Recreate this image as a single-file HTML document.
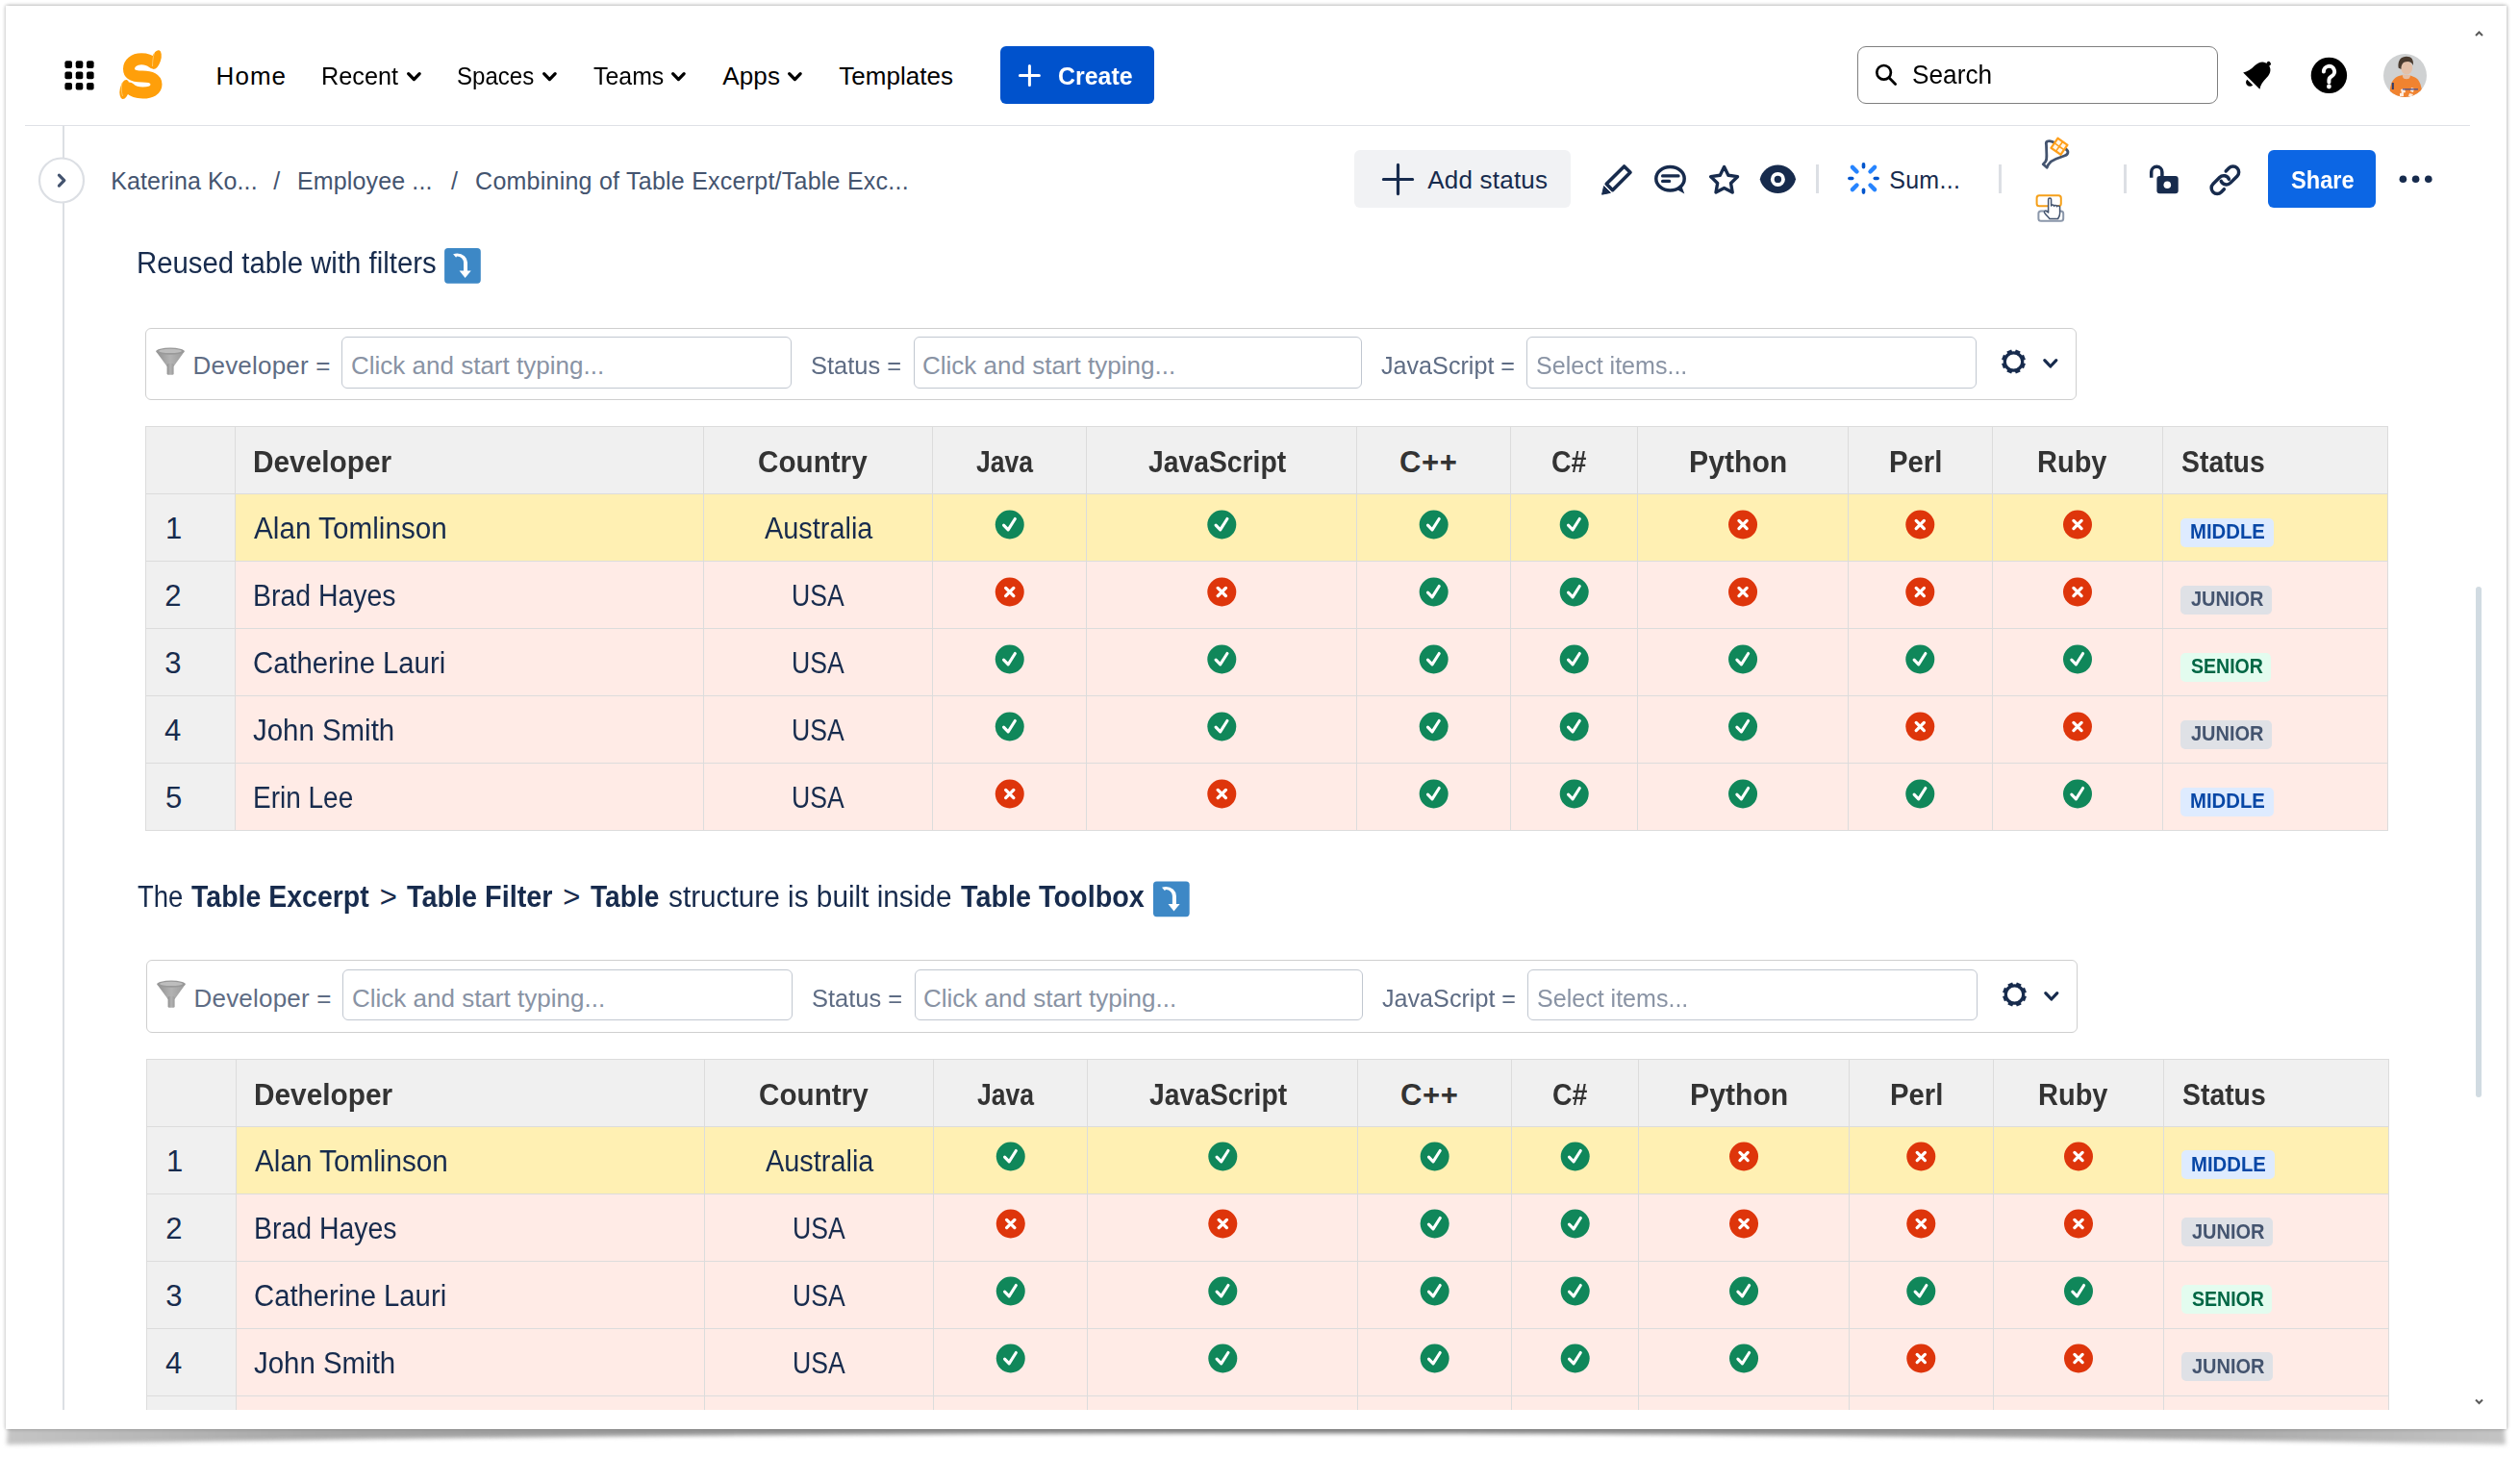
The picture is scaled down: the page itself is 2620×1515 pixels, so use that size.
<!DOCTYPE html>
<html><head><meta charset="utf-8"><title>Combining of Table Excerpt/Table Excerpt Include</title>
<style>
html,body{margin:0;padding:0;background:#fff;width:2620px;height:1515px;overflow:hidden;position:relative}
.t{position:absolute;white-space:nowrap;font-family:"Liberation Sans",sans-serif;line-height:1;transform-origin:0 0}
svg{overflow:visible}
</style></head><body>
<svg style="position:absolute;left:0;top:1470px" width="2620" height="45" viewBox="0 1470 2620 45">
<defs>
<linearGradient id="shg" x1="0" x2="1" y1="0" y2="0">
<stop offset="0" stop-color="#c4c4c4"/><stop offset="0.12" stop-color="#a8a8a8"/><stop offset="0.3" stop-color="#939393"/><stop offset="0.5" stop-color="#858585"/><stop offset="0.7" stop-color="#939393"/><stop offset="0.88" stop-color="#a8a8a8"/><stop offset="1" stop-color="#c4c4c4"/>
</linearGradient>
<filter id="shb" x="-5%" y="-100%" width="110%" height="300%"><feGaussianBlur stdDeviation="2"/></filter>
</defs>
<path d="M8,1484 L2604,1484 L2605,1502 Q1306,1479 7,1502 Z" fill="url(#shg)" filter="url(#shb)"/>
</svg>
<div style="position:absolute;left:6px;top:6px;width:2600px;height:1480px;background:#fff;box-shadow:-1.5px 0 3.5px rgba(0,0,0,0.17),1.5px 0 3.5px rgba(0,0,0,0.17),0 -1px 4px rgba(0,0,0,0.10)"></div>
<svg style="position:absolute;left:64px;top:60px;" width="38" height="38" viewBox="64 60 38 38"><rect x="67.40" y="63.30" width="7.6" height="7.6" rx="2" fill="#000"/><rect x="78.70" y="63.30" width="7.6" height="7.6" rx="2" fill="#000"/><rect x="90.00" y="63.30" width="7.6" height="7.6" rx="2" fill="#000"/><rect x="67.40" y="74.60" width="7.6" height="7.6" rx="2" fill="#000"/><rect x="78.70" y="74.60" width="7.6" height="7.6" rx="2" fill="#000"/><rect x="90.00" y="74.60" width="7.6" height="7.6" rx="2" fill="#000"/><rect x="67.40" y="85.90" width="7.6" height="7.6" rx="2" fill="#000"/><rect x="78.70" y="85.90" width="7.6" height="7.6" rx="2" fill="#000"/><rect x="90.00" y="85.90" width="7.6" height="7.6" rx="2" fill="#000"/></svg>
<svg style="position:absolute;left:118px;top:48px;" width="56" height="62" viewBox="118 48 56 62"><g transform="translate(120,50)">
<path d="M39,15.5 C35.5,12.2 31.5,11.3 27,11.3 C19,11.3 14,16 14,21.5 C14,27.5 20,29.5 28,29.5 C37,29.5 42.5,32 42.5,37.8 C42.5,43.5 37,46.5 28.5,46.5 C21.5,46.5 17.5,44.5 14.5,41.5" fill="none" stroke="#ff9f0a" stroke-width="12" stroke-linecap="round"/>
<ellipse cx="42.3" cy="12" rx="4.8" ry="10.2" transform="rotate(18 42.3 12)" fill="#ff9f0a"/>
<ellipse cx="9.5" cy="43" rx="4.8" ry="10.2" transform="rotate(12 9.5 43)" fill="#ff9f0a"/>
<path d="M40.5,5 C39,9 38.5,15 38.5,19" stroke="#ffd27a" stroke-width="0.8" fill="none"/>
<path d="M7,36 C6,40 6,46 7.5,50" stroke="#ffd27a" stroke-width="0.8" fill="none"/>
</g></svg>
<div class="t" style="left:224.60px;top:66.00px;font-size:26px;color:#000;letter-spacing:1.04px">Home</div>
<div class="t" style="left:334.26px;top:66.00px;font-size:26px;color:#000;transform:scaleX(0.9710)">Recent</div>
<div class="t" style="left:475.27px;top:66.00px;font-size:26px;color:#000;transform:scaleX(0.9251)">Spaces</div>
<div class="t" style="left:617.20px;top:66.00px;font-size:26px;color:#000;transform:scaleX(0.9572)">Teams</div>
<div class="t" style="left:751.20px;top:66.00px;font-size:26px;color:#000;letter-spacing:0.18px">Apps</div>
<div class="t" style="left:872.20px;top:66.00px;font-size:26px;color:#000;letter-spacing:0.04px">Templates</div>
<svg style="position:absolute;left:420px;top:70px;" width="22" height="20" viewBox="420 70 22 20"><path d="M424.65,76.65 L430.40,82.55 L436.15,76.65" fill="none" stroke="#000" stroke-width="3.3" stroke-linecap="round" stroke-linejoin="round"/></svg>
<svg style="position:absolute;left:561px;top:70px;" width="22" height="20" viewBox="561 70 22 20"><path d="M565.65,76.65 L571.40,82.55 L577.15,76.65" fill="none" stroke="#000" stroke-width="3.3" stroke-linecap="round" stroke-linejoin="round"/></svg>
<svg style="position:absolute;left:695px;top:70px;" width="22" height="20" viewBox="695 70 22 20"><path d="M699.65,76.65 L705.40,82.55 L711.15,76.65" fill="none" stroke="#000" stroke-width="3.3" stroke-linecap="round" stroke-linejoin="round"/></svg>
<svg style="position:absolute;left:816px;top:70px;" width="22" height="20" viewBox="816 70 22 20"><path d="M820.65,76.65 L826.40,82.55 L832.15,76.65" fill="none" stroke="#000" stroke-width="3.3" stroke-linecap="round" stroke-linejoin="round"/></svg>
<div style="position:absolute;left:1040px;top:47.7px;width:160px;height:60px;background:#0052cc;border-radius:6px"></div>
<svg style="position:absolute;left:1050px;top:60px;" width="40" height="40" viewBox="1050 60 40 40"><path d="M1070.4,68.6 V88.6 M1060.4,78.6 H1080.4" stroke="#fff" stroke-width="3" stroke-linecap="round"/></svg>
<div class="t" style="left:1099.84px;top:66.00px;font-size:26px;color:#fff;font-weight:bold;transform:scaleX(0.9588)">Create</div>
<div style="position:absolute;left:1930.8px;top:47.8px;width:375.2px;height:60.2px;border:1.25px solid #7f7f7f;border-radius:9px;box-sizing:border-box"></div>
<svg style="position:absolute;left:1945px;top:62px;" width="32" height="32" viewBox="1945 62 32 32"><circle cx="1958.6" cy="75.3" r="7.3" fill="none" stroke="#000" stroke-width="2.7"/><path d="M1964,80.8 L1970.6,87.4" stroke="#000" stroke-width="2.8" stroke-linecap="round"/></svg>
<div class="t" style="left:1987.83px;top:65.20px;font-size:27px;color:#000;transform:scaleX(0.9721)">Search</div>
<svg style="position:absolute;left:2326px;top:54px;" width="46" height="46" viewBox="2326 54 46 46"><g transform="translate(2348.6,76.3) rotate(45)">
<path d="M-12.2,11 L12.2,11 C9.6,7.4 8.8,3 8.8,-2.5 C8.8,-9.5 4.9,-13.3 0,-13.3 C-4.9,-13.3 -8.8,-9.5 -8.8,-2.5 C-8.8,3 -9.6,7.4 -12.2,11 Z" fill="#000"/>
<circle cx="0" cy="-14.2" r="2.3" fill="#000"/>
<path d="M-4.2,13.2 A4.2,4.2 0 0 0 4.2,13.2 Z" fill="#000"/>
</g></svg>
<svg style="position:absolute;left:2400px;top:57px;" width="44" height="44" viewBox="2400 57 44 44"><circle cx="2421.4" cy="78.4" r="18.7" fill="#000"/>
<path d="M2415.9,74.4 A5.6,5.6 0 1 1 2424.2,79.3 C2422.3,80.4 2421.4,81.5 2421.4,83.5 L2421.4,85.6" fill="none" stroke="#fff" stroke-width="4" stroke-linecap="round"/>
<circle cx="2421.4" cy="90" r="2.4" fill="#fff"/></svg>
<svg style="position:absolute;left:2476px;top:54px;" width="50" height="50" viewBox="2476 54 50 50"><defs><clipPath id="avc"><circle cx="2500.5" cy="78.5" r="22.5"/></clipPath></defs>
<g clip-path="url(#avc)">
<rect x="2476" y="54" width="50" height="50" fill="#cfd1d2"/>
<path d="M2484,106 L2485,92 C2486,85 2489,80.5 2494,79 L2498,78 L2506,78.5 L2511,80.5 C2515,82.5 2517,88 2518,94 L2519,106 Z" fill="#f08330"/>
<path d="M2497.5,77.5 L2506.5,78 L2505,81.5 C2503,82.5 2500,82.5 2498.5,81 Z" fill="#e6bea4"/>
<ellipse cx="2502.2" cy="70.6" rx="6" ry="7" fill="#e4c0a8"/>
<path d="M2493.6,70.5 C2492.6,62.5 2496.6,58.8 2502,58.8 C2507.2,58.8 2509.6,62 2508.9,68 C2507.4,64 2504,63.2 2500,64.4 C2497.6,65.5 2496.4,67.8 2496.4,72 Z" fill="#4a3b2f"/>
<rect x="2486.8" y="86" width="2" height="7" fill="#2d3a6a"/>
<path d="M2496,93 L2500,92 L2501,96 L2497,97 Z M2507,91 L2510,92 L2509,96 L2506,95 Z M2495,97 L2499,96 L2499,100 L2495,100 Z M2505,97 L2509,98 L2507,101 L2504,100 Z" fill="#fff" opacity="0.85"/>
<rect x="2498" y="92" width="16" height="1.6" fill="#4a4f8a" opacity="0.8"/>
</g></svg>
<svg style="position:absolute;left:2570px;top:28px;" width="16" height="14" viewBox="2570 28 16 14"><path d="M2574,37 L2577.5,33.5 L2581,37" fill="none" stroke="#5a5a5a" stroke-width="2"/></svg>
<svg style="position:absolute;left:2570px;top:1450px;" width="16" height="14" viewBox="2570 1450 16 14"><path d="M2574,1455.5 L2577.5,1459 L2581,1455.5" fill="none" stroke="#5a5a5a" stroke-width="2"/></svg>
<div style="position:absolute;left:26px;top:130px;width:2542px;height:1.3px;background:#dfe1e6"></div>
<div style="position:absolute;left:65px;top:131px;width:2px;height:1335px;background:#dcdfe4"></div>
<div style="position:absolute;left:2574px;top:610px;width:6px;height:531px;background:#d1dbe2;border-radius:3px"></div>
<svg style="position:absolute;left:38px;top:162px;" width="52" height="52" viewBox="38 162 52 52"><circle cx="64" cy="187.5" r="23" fill="#fff" stroke="#dcdfe4" stroke-width="2.2"/><path d="M61.4,182.1 L66.8,187.6 L61.4,193.1" fill="none" stroke="#44546f" stroke-width="3.2" stroke-linecap="round" stroke-linejoin="round"/></svg>
<div class="t" style="left:115.20px;top:175.60px;font-size:25px;color:#44546f;letter-spacing:0.07px">Katerina Ko...</div>
<div class="t" style="left:284.20px;top:175.60px;font-size:25px;color:#44546f">/</div>
<div class="t" style="left:308.90px;top:175.60px;font-size:25px;color:#44546f;letter-spacing:0.15px">Employee ...</div>
<div class="t" style="left:469.00px;top:175.60px;font-size:25px;color:#44546f">/</div>
<div class="t" style="left:494.10px;top:175.80px;font-size:25px;color:#44546f;letter-spacing:0.24px">Combining of Table Excerpt/Table Exc...</div>
<div style="position:absolute;left:1408.3px;top:155.8px;width:224.4px;height:60px;background:#f1f2f4;border-radius:6px"></div>
<svg style="position:absolute;left:1430px;top:164px;" width="46" height="46" viewBox="1430 164 46 46"><path d="M1453.5,171.4 V201.6 M1438.4,186.5 H1468.6" stroke="#172b4d" stroke-width="3.2" stroke-linecap="round"/></svg>
<div class="t" style="left:1484.20px;top:174.00px;font-size:26px;color:#172b4d;letter-spacing:0.22px">Add status</div>
<svg style="position:absolute;left:1660px;top:165px;" width="42" height="42" viewBox="1660 165 42 42"><path d="M1670.2,191.3 L1688.6,172.9 L1695,179.3 L1676.6,197.7 Z" fill="none" stroke="#172b4d" stroke-width="3.6" stroke-linejoin="round"/>
<path d="M1665.6,202.2 L1667.6,193.6 L1674.4,200.4 Z" fill="#172b4d" stroke="#172b4d" stroke-width="1" stroke-linejoin="round"/></svg>
<svg style="position:absolute;left:1714px;top:165px;" width="44" height="42" viewBox="1714 165 44 42"><ellipse cx="1736.5" cy="185.8" rx="14.7" ry="12.2" fill="none" stroke="#172b4d" stroke-width="3.5"/>
<path d="M1742.5,196.5 L1751.3,201.4 L1748,192.5 Z" fill="#172b4d"/>
<path d="M1728.6,182.9 H1745 M1728.6,188.4 H1735.6" stroke="#172b4d" stroke-width="3.3" stroke-linecap="round"/></svg>
<svg style="position:absolute;left:1772px;top:166px;" width="42" height="42" viewBox="1772 166 42 42"><path d="M1792.60,173.60 L1796.89,182.29 L1806.49,183.69 L1799.54,190.46 L1801.18,200.01 L1792.60,195.50 L1784.02,200.01 L1785.66,190.46 L1778.71,183.69 L1788.31,182.29 Z" fill="none" stroke="#172b4d" stroke-width="3.4" stroke-linejoin="round"/></svg>
<svg style="position:absolute;left:1826px;top:168px;" width="46" height="38" viewBox="1826 168 46 38"><path d="M1829.8,186.3 C1831.5,177.5 1840,171.6 1848.4,171.6 C1856.8,171.6 1865.3,177.5 1867,186.3 C1865.3,195.1 1856.8,201.1 1848.4,201.1 C1840,201.1 1831.5,195.1 1829.8,186.3 Z" fill="#172b4d"/>
<circle cx="1848.4" cy="186.4" r="7.5" fill="#fff"/><circle cx="1848.4" cy="186.4" r="3.7" fill="#172b4d"/></svg>
<div style="position:absolute;left:1888.4px;top:171px;width:2.4px;height:29.6px;background:#dcdfe4"></div>
<div style="position:absolute;left:2078.4px;top:171px;width:2.4px;height:29.6px;background:#dcdfe4"></div>
<div style="position:absolute;left:2208.3px;top:171px;width:2.4px;height:29.6px;background:#dcdfe4"></div>
<svg style="position:absolute;left:1916px;top:164px;" width="44" height="44" viewBox="1916 164 44 44"><path d="M1937.50,173.70 L1937.50,170.90" stroke="#0055cc" stroke-width="3.6" stroke-linecap="round"/><path d="M1937.50,197.30 L1937.50,200.10" stroke="#0055cc" stroke-width="3.6" stroke-linecap="round"/><path d="M1925.70,185.50 L1922.90,185.50" stroke="#0055cc" stroke-width="3.6" stroke-linecap="round"/><path d="M1949.30,185.50 L1952.10,185.50" stroke="#0055cc" stroke-width="3.6" stroke-linecap="round"/><path d="M1930.50,178.50 L1925.90,173.90" stroke="#2684ff" stroke-width="4.4" stroke-linecap="round"/><path d="M1944.50,178.50 L1949.10,173.90" stroke="#2684ff" stroke-width="4.4" stroke-linecap="round"/><path d="M1930.50,192.50 L1925.90,197.10" stroke="#2684ff" stroke-width="4.4" stroke-linecap="round"/><path d="M1944.50,192.50 L1949.10,197.10" stroke="#2684ff" stroke-width="4.4" stroke-linecap="round"/></svg>
<div class="t" style="left:1964.20px;top:174.60px;font-size:25px;color:#172b4d;letter-spacing:0.30px">Sum...</div>
<svg style="position:absolute;left:2116px;top:136px;" width="42" height="46" viewBox="2116 136 42 46"><path d="M2127.5,150.5 C2126.5,147 2129.5,145.8 2133.5,147.2 L2147.5,154.8 C2151.3,157.2 2150.3,160.6 2147,161.7 L2137.5,165.3 C2134,166.6 2131.5,168.5 2129.6,171.2 L2128.2,174.2 L2124.2,170.8 L2126.8,167.8 C2128.2,165.6 2127.9,163 2127.8,160 Z" fill="#fff" stroke="#44546f" stroke-width="2.8" stroke-linejoin="round"/>
<g transform="translate(2141,152.3) rotate(35)"><rect x="-7.2" y="-7.2" width="14.4" height="14.4" rx="1" fill="#ff9f1a"/>
<rect x="-5" y="-5" width="4.2" height="4.2" fill="#fff" opacity="0.9"/><rect x="0.8" y="-5" width="4.2" height="4.2" fill="#fff" opacity="0.9"/><rect x="-5" y="0.8" width="4.2" height="4.2" fill="#fff" opacity="0.9"/><rect x="0.8" y="0.8" width="4.2" height="4.2" fill="#fff" opacity="0.9"/></g></svg>
<svg style="position:absolute;left:2112px;top:198px;" width="40" height="38" viewBox="2112 198 40 38"><rect x="2117.6" y="203.3" width="25.2" height="11" rx="2.6" fill="none" stroke="#f5a01a" stroke-width="2"/>
<rect x="2119.4" y="219.4" width="25.8" height="10.4" rx="2.6" fill="none" stroke="#8b97aa" stroke-width="2"/>
<path d="M2129.6,221 L2129.6,207.6 C2129.6,205.4 2132.6,205.4 2132.6,207.6 L2132.6,214 C2133,212.6 2135.4,212.8 2135.6,214.4 C2136,213 2138.4,213.2 2138.6,214.8 C2139,213.6 2141.4,213.8 2141.6,215.4 L2141.6,222 C2141.6,224.5 2140.6,226 2139.6,227.5 L2131,227.5 C2129,225 2127,223.5 2125.6,221.2 C2124.8,219.8 2126.6,218.6 2127.6,219.6 Z" fill="#fff" stroke="#44546f" stroke-width="1.5" stroke-linejoin="round"/></svg>
<svg style="position:absolute;left:2230px;top:166px;" width="40" height="40" viewBox="2230 166 40 40"><path d="M2236.7,184.8 V178.9 A5.6,5.6 0 0 1 2247.9,178.9 V184" fill="none" stroke="#172b4d" stroke-width="3.5"/>
<rect x="2242.4" y="182.9" width="22.3" height="18.3" rx="3" fill="#172b4d"/><circle cx="2253.3" cy="192.2" r="3.8" fill="#fff"/></svg>
<svg style="position:absolute;left:2290px;top:164px;" width="46" height="46" viewBox="2290 164 46 46"><g transform="translate(2313.3,187.3) rotate(-45)" fill="none" stroke="#172b4d" stroke-width="3.5" stroke-linecap="round">
<path d="M-7.3,6 L-11.5,6 A6,6 0 0 1 -11.5,-6 L-2,-6 A6,6 0 0 1 3.6,2.2"/>
<path d="M7.3,-6 L11.8,-6 A6,6 0 0 1 11.8,6 L2,6 A6,6 0 0 1 -3.6,-2.2"/>
</g></svg>
<div style="position:absolute;left:2358px;top:156px;width:112px;height:59.7px;background:#0c66e4;border-radius:6px"></div>
<div class="t" style="left:2381.80px;top:174.00px;font-size:26px;color:#fff;font-weight:bold;transform:scaleX(0.9081)">Share</div>
<svg style="position:absolute;left:2490px;top:180px;" width="44" height="14" viewBox="2490 180 44 14"><circle cx="2498.4" cy="186.3" r="3.8" fill="#172b4d"/><circle cx="2511.6" cy="186.3" r="3.8" fill="#172b4d"/><circle cx="2524.8" cy="186.3" r="3.8" fill="#172b4d"/></svg>
<svg style="position:absolute;left:455px;top:250px;" width="52" height="52" viewBox="455 250 52 52"><g transform="translate(0.00,0.00)"><rect x="462.1" y="258.1" width="37.7" height="36.6" rx="3.6" fill="#3d88c6"/>
<path d="M471.1,264.2 C472.5,263.8 474,263.5 475.4,263.5 A10.6,9.6 0 0 1 486,273.1 L486,282.5 L482,282.5 L482,273.1 A6.6,6.6 0 0 0 475.4,266.5 C475,266.5 474.6,267 474.1,267.8 Z" fill="#fff"/>
<path d="M477.6,281.6 L489.7,281.6 L483.6,289 Z" fill="#fff"/></g></svg>
<div class="t" style="left:142.31px;top:257.80px;font-size:31px;color:#172b4d;transform:scaleX(0.9470)">Reused table with filters</div>
<div style="position:absolute;left:151.4px;top:340.6px;width:2007.4px;height:75.7px;border:1.5px solid #cfcfcf;border-radius:6px;box-sizing:border-box"></div>
<svg style="position:absolute;left:158px;top:358px;" width="38" height="36" viewBox="158 358 38 36"><defs><linearGradient id="fg0" x1="0" x2="1"><stop offset="0" stop-color="#8f8f8f"/><stop offset="0.5" stop-color="#b3b3b3"/><stop offset="1" stop-color="#9a9a9a"/></linearGradient></defs>
<g transform="translate(0,0)">
<path d="M162.3,365.5 L191.7,365.5 L180.6,381 L173.6,381 Z" fill="url(#fg0)"/>
<rect x="173.6" y="378" width="7" height="11.8" rx="1.5" fill="url(#fg0)"/>
<ellipse cx="177" cy="365.2" rx="14.8" ry="3.6" fill="#999"/>
<ellipse cx="177" cy="364.9" rx="12" ry="2.1" fill="#bdbdbd"/></g></svg>
<div class="t" style="left:200.50px;top:367.00px;font-size:26px;color:#5e6c84;letter-spacing:0.21px">Developer =</div>
<div style="position:absolute;left:355px;top:350px;width:468.4px;height:53.7px;border:1.5px solid #c1c7d0;border-radius:6px;box-sizing:border-box"></div>
<div class="t" style="left:364.90px;top:366.80px;font-size:26px;color:#8993a4;letter-spacing:0.01px">Click and start typing...</div>
<div class="t" style="left:842.62px;top:367.00px;font-size:26px;color:#5e6c84;transform:scaleX(0.9794)">Status =</div>
<div style="position:absolute;left:949.5px;top:350px;width:466.8px;height:53.7px;border:1.5px solid #c1c7d0;border-radius:6px;box-sizing:border-box"></div>
<div class="t" style="left:958.90px;top:366.80px;font-size:26px;color:#8993a4;letter-spacing:0.01px">Click and start typing...</div>
<div class="t" style="left:1435.90px;top:367.00px;font-size:26px;color:#5e6c84;transform:scaleX(0.9670)">JavaScript =</div>
<div style="position:absolute;left:1586.5px;top:350px;width:468.3px;height:53.7px;border:1.5px solid #c1c7d0;border-radius:6px;box-sizing:border-box"></div>
<div class="t" style="left:1596.54px;top:366.80px;font-size:26px;color:#8993a4;transform:scaleX(0.9634)">Select items...</div>
<svg style="position:absolute;left:2074px;top:356px;" width="72" height="40" viewBox="2074 356 72 40"><g transform="translate(0,0)"><path d="M2101.81,379.44 L2104.96,380.75" stroke="#172b4d" stroke-width="5.2"/><path d="M2096.94,384.31 L2098.25,387.46" stroke="#172b4d" stroke-width="5.2"/><path d="M2090.06,384.31 L2088.75,387.46" stroke="#172b4d" stroke-width="5.2"/><path d="M2085.19,379.44 L2082.04,380.75" stroke="#172b4d" stroke-width="5.2"/><path d="M2085.19,372.56 L2082.04,371.25" stroke="#172b4d" stroke-width="5.2"/><path d="M2090.06,367.69 L2088.75,364.54" stroke="#172b4d" stroke-width="5.2"/><path d="M2096.94,367.69 L2098.25,364.54" stroke="#172b4d" stroke-width="5.2"/><path d="M2101.81,372.56 L2104.96,371.25" stroke="#172b4d" stroke-width="5.2"/><circle cx="2093.5" cy="376.0" r="9.2" fill="none" stroke="#172b4d" stroke-width="3.2"/><path d="M2125.80,374.60 L2131.80,381.00 L2137.80,374.60" fill="none" stroke="#172b4d" stroke-width="3.2" stroke-linecap="round" stroke-linejoin="round"/></g></svg>
<div style="position:absolute;left:151.6px;top:443.5px;width:2330.9px;height:70px;background:#f0f0f0"></div>
<div style="position:absolute;left:151.6px;top:513.5px;width:93.0px;height:70px;background:#f0f0f0"></div>
<div style="position:absolute;left:244.6px;top:513.5px;width:2237.9px;height:70px;background:#fff0b3"></div>
<div style="position:absolute;left:151.6px;top:583.5px;width:93.0px;height:70px;background:#f0f0f0"></div>
<div style="position:absolute;left:244.6px;top:583.5px;width:2237.9px;height:70px;background:#ffebe6"></div>
<div style="position:absolute;left:151.6px;top:653.5px;width:93.0px;height:70px;background:#f0f0f0"></div>
<div style="position:absolute;left:244.6px;top:653.5px;width:2237.9px;height:70px;background:#ffebe6"></div>
<div style="position:absolute;left:151.6px;top:723.5px;width:93.0px;height:70px;background:#f0f0f0"></div>
<div style="position:absolute;left:244.6px;top:723.5px;width:2237.9px;height:70px;background:#ffebe6"></div>
<div style="position:absolute;left:151.6px;top:793.5px;width:93.0px;height:70px;background:#f0f0f0"></div>
<div style="position:absolute;left:244.6px;top:793.5px;width:2237.9px;height:70px;background:#ffebe6"></div>
<div style="position:absolute;left:151.1px;top:443.0px;width:1.1px;height:420.5px;background:#dcdcdc"></div>
<div style="position:absolute;left:244.1px;top:443.0px;width:1.1px;height:420.5px;background:#dcdcdc"></div>
<div style="position:absolute;left:730.8px;top:443.0px;width:1.1px;height:420.5px;background:#dcdcdc"></div>
<div style="position:absolute;left:968.8px;top:443.0px;width:1.1px;height:420.5px;background:#dcdcdc"></div>
<div style="position:absolute;left:1129.1px;top:443.0px;width:1.1px;height:420.5px;background:#dcdcdc"></div>
<div style="position:absolute;left:1409.9px;top:443.0px;width:1.1px;height:420.5px;background:#dcdcdc"></div>
<div style="position:absolute;left:1569.8px;top:443.0px;width:1.1px;height:420.5px;background:#dcdcdc"></div>
<div style="position:absolute;left:1702.0px;top:443.0px;width:1.1px;height:420.5px;background:#dcdcdc"></div>
<div style="position:absolute;left:1920.5px;top:443.0px;width:1.1px;height:420.5px;background:#dcdcdc"></div>
<div style="position:absolute;left:2070.5px;top:443.0px;width:1.1px;height:420.5px;background:#dcdcdc"></div>
<div style="position:absolute;left:2247.9px;top:443.0px;width:1.1px;height:420.5px;background:#dcdcdc"></div>
<div style="position:absolute;left:2482.0px;top:443.0px;width:1.1px;height:420.5px;background:#dcdcdc"></div>
<div style="position:absolute;left:151.1px;top:443.0px;width:2331.9px;height:1.1px;background:#dcdcdc"></div>
<div style="position:absolute;left:151.1px;top:513.0px;width:2331.9px;height:1.1px;background:#dcdcdc"></div>
<div style="position:absolute;left:151.1px;top:583.0px;width:2331.9px;height:1.1px;background:#dcdcdc"></div>
<div style="position:absolute;left:151.1px;top:653.0px;width:2331.9px;height:1.1px;background:#dcdcdc"></div>
<div style="position:absolute;left:151.1px;top:723.0px;width:2331.9px;height:1.1px;background:#dcdcdc"></div>
<div style="position:absolute;left:151.1px;top:793.0px;width:2331.9px;height:1.1px;background:#dcdcdc"></div>
<div style="position:absolute;left:151.1px;top:863.0px;width:2331.9px;height:1.1px;background:#dcdcdc"></div>
<div class="t" style="left:263.28px;top:464.70px;font-size:31px;color:#333333;font-weight:bold;transform:scaleX(0.9619)">Developer</div>
<div class="t" style="left:788.24px;top:464.70px;font-size:31px;color:#333333;font-weight:bold;transform:scaleX(0.9563)">Country</div>
<div class="t" style="left:1015.20px;top:464.70px;font-size:31px;color:#333333;font-weight:bold;transform:scaleX(0.8577)">Java</div>
<div class="t" style="left:1194.10px;top:464.70px;font-size:31px;color:#333333;font-weight:bold;transform:scaleX(0.9131)">JavaScript</div>
<div class="t" style="left:1455.00px;top:464.70px;font-size:31px;color:#333333;font-weight:bold;letter-spacing:0.65px">C++</div>
<div class="t" style="left:1613.28px;top:464.70px;font-size:31px;color:#333333;font-weight:bold;transform:scaleX(0.9196)">C#</div>
<div class="t" style="left:1755.95px;top:464.70px;font-size:31px;color:#333333;font-weight:bold;transform:scaleX(0.9734)">Python</div>
<div class="t" style="left:1963.81px;top:464.70px;font-size:31px;color:#333333;font-weight:bold;transform:scaleX(0.9458)">Perl</div>
<div class="t" style="left:2117.83px;top:464.70px;font-size:31px;color:#333333;font-weight:bold;transform:scaleX(0.9350)">Ruby</div>
<div class="t" style="left:2267.80px;top:464.70px;font-size:31px;color:#333333;font-weight:bold;transform:scaleX(0.9155)">Status</div>
<div class="t" style="left:172.00px;top:534.10px;font-size:31px;color:#172b4d">1</div>
<div class="t" style="left:264.20px;top:534.10px;font-size:31px;color:#172b4d;transform:scaleX(0.9575)">Alan Tomlinson</div>
<div class="t" style="left:794.65px;top:534.10px;font-size:31px;color:#172b4d;transform:scaleX(0.9319)">Australia</div>
<div style="position:absolute;left:2266.9px;top:538.5px;width:97px;height:30px;background:#deebff;border-radius:5px"></div>
<div class="t" style="left:2276.68px;top:542.40px;font-size:22px;color:#0747a6;font-weight:bold;transform:scaleX(0.9231)">MIDDLE</div>
<div class="t" style="left:171.20px;top:604.10px;font-size:31px;color:#172b4d">2</div>
<div class="t" style="left:263.07px;top:604.10px;font-size:31px;color:#172b4d;transform:scaleX(0.9168)">Brad Hayes</div>
<div class="t" style="left:822.83px;top:604.10px;font-size:31px;color:#172b4d;transform:scaleX(0.8588)">USA</div>
<div style="position:absolute;left:2266.9px;top:608.5px;width:95px;height:30px;background:#dfe1e6;border-radius:5px"></div>
<div class="t" style="left:2277.60px;top:612.40px;font-size:22px;color:#44546f;font-weight:bold;transform:scaleX(0.9083)">JUNIOR</div>
<div class="t" style="left:171.20px;top:674.10px;font-size:31px;color:#172b4d">3</div>
<div class="t" style="left:263.46px;top:674.10px;font-size:31px;color:#172b4d;transform:scaleX(0.9442)">Catherine Lauri</div>
<div class="t" style="left:822.83px;top:674.10px;font-size:31px;color:#172b4d;transform:scaleX(0.8588)">USA</div>
<div style="position:absolute;left:2266.9px;top:678.5px;width:94px;height:30px;background:#e3fcef;border-radius:5px"></div>
<div class="t" style="left:2277.60px;top:682.40px;font-size:22px;color:#006644;font-weight:bold;transform:scaleX(0.8880)">SENIOR</div>
<div class="t" style="left:171.10px;top:744.10px;font-size:31px;color:#172b4d">4</div>
<div class="t" style="left:263.30px;top:744.10px;font-size:31px;color:#172b4d;transform:scaleX(0.9491)">John Smith</div>
<div class="t" style="left:822.83px;top:744.10px;font-size:31px;color:#172b4d;transform:scaleX(0.8588)">USA</div>
<div style="position:absolute;left:2266.9px;top:748.5px;width:95px;height:30px;background:#dfe1e6;border-radius:5px"></div>
<div class="t" style="left:2277.60px;top:752.40px;font-size:22px;color:#44546f;font-weight:bold;transform:scaleX(0.9083)">JUNIOR</div>
<div class="t" style="left:171.90px;top:814.10px;font-size:31px;color:#172b4d">5</div>
<div class="t" style="left:263.09px;top:814.10px;font-size:31px;color:#172b4d;transform:scaleX(0.9027)">Erin Lee</div>
<div class="t" style="left:822.83px;top:814.10px;font-size:31px;color:#172b4d;transform:scaleX(0.8588)">USA</div>
<div style="position:absolute;left:2266.9px;top:818.5px;width:97px;height:30px;background:#deebff;border-radius:5px"></div>
<div class="t" style="left:2276.68px;top:822.40px;font-size:22px;color:#0747a6;font-weight:bold;transform:scaleX(0.9231)">MIDDLE</div>
<svg style="position:absolute;left:960px;top:513.5px;" width="1320" height="420" viewBox="960 513.5 1320 420"><circle cx="1049.75" cy="545.00" r="15" fill="#10875a"/><path d="M1043.55,545.60 L1048.15,550.40 L1055.35,539.00" fill="none" stroke="#fff" stroke-width="3.1" stroke-linecap="round" stroke-linejoin="round"/><circle cx="1270.30" cy="545.00" r="15" fill="#10875a"/><path d="M1264.10,545.60 L1268.70,550.40 L1275.90,539.00" fill="none" stroke="#fff" stroke-width="3.1" stroke-linecap="round" stroke-linejoin="round"/><circle cx="1490.65" cy="545.00" r="15" fill="#10875a"/><path d="M1484.45,545.60 L1489.05,550.40 L1496.25,539.00" fill="none" stroke="#fff" stroke-width="3.1" stroke-linecap="round" stroke-linejoin="round"/><circle cx="1636.70" cy="545.00" r="15" fill="#10875a"/><path d="M1630.50,545.60 L1635.10,550.40 L1642.30,539.00" fill="none" stroke="#fff" stroke-width="3.1" stroke-linecap="round" stroke-linejoin="round"/><circle cx="1812.05" cy="545.00" r="15" fill="#de350b"/><path d="M1807.95,540.90 L1816.15,549.10 M1816.15,540.90 L1807.95,549.10" fill="none" stroke="#fff" stroke-width="3.3" stroke-linecap="round"/><circle cx="1996.30" cy="545.00" r="15" fill="#de350b"/><path d="M1992.20,540.90 L2000.40,549.10 M2000.40,540.90 L1992.20,549.10" fill="none" stroke="#fff" stroke-width="3.3" stroke-linecap="round"/><circle cx="2160.00" cy="545.00" r="15" fill="#de350b"/><path d="M2155.90,540.90 L2164.10,549.10 M2164.10,540.90 L2155.90,549.10" fill="none" stroke="#fff" stroke-width="3.3" stroke-linecap="round"/><circle cx="1049.75" cy="615.00" r="15" fill="#de350b"/><path d="M1045.65,610.90 L1053.85,619.10 M1053.85,610.90 L1045.65,619.10" fill="none" stroke="#fff" stroke-width="3.3" stroke-linecap="round"/><circle cx="1270.30" cy="615.00" r="15" fill="#de350b"/><path d="M1266.20,610.90 L1274.40,619.10 M1274.40,610.90 L1266.20,619.10" fill="none" stroke="#fff" stroke-width="3.3" stroke-linecap="round"/><circle cx="1490.65" cy="615.00" r="15" fill="#10875a"/><path d="M1484.45,615.60 L1489.05,620.40 L1496.25,609.00" fill="none" stroke="#fff" stroke-width="3.1" stroke-linecap="round" stroke-linejoin="round"/><circle cx="1636.70" cy="615.00" r="15" fill="#10875a"/><path d="M1630.50,615.60 L1635.10,620.40 L1642.30,609.00" fill="none" stroke="#fff" stroke-width="3.1" stroke-linecap="round" stroke-linejoin="round"/><circle cx="1812.05" cy="615.00" r="15" fill="#de350b"/><path d="M1807.95,610.90 L1816.15,619.10 M1816.15,610.90 L1807.95,619.10" fill="none" stroke="#fff" stroke-width="3.3" stroke-linecap="round"/><circle cx="1996.30" cy="615.00" r="15" fill="#de350b"/><path d="M1992.20,610.90 L2000.40,619.10 M2000.40,610.90 L1992.20,619.10" fill="none" stroke="#fff" stroke-width="3.3" stroke-linecap="round"/><circle cx="2160.00" cy="615.00" r="15" fill="#de350b"/><path d="M2155.90,610.90 L2164.10,619.10 M2164.10,610.90 L2155.90,619.10" fill="none" stroke="#fff" stroke-width="3.3" stroke-linecap="round"/><circle cx="1049.75" cy="685.00" r="15" fill="#10875a"/><path d="M1043.55,685.60 L1048.15,690.40 L1055.35,679.00" fill="none" stroke="#fff" stroke-width="3.1" stroke-linecap="round" stroke-linejoin="round"/><circle cx="1270.30" cy="685.00" r="15" fill="#10875a"/><path d="M1264.10,685.60 L1268.70,690.40 L1275.90,679.00" fill="none" stroke="#fff" stroke-width="3.1" stroke-linecap="round" stroke-linejoin="round"/><circle cx="1490.65" cy="685.00" r="15" fill="#10875a"/><path d="M1484.45,685.60 L1489.05,690.40 L1496.25,679.00" fill="none" stroke="#fff" stroke-width="3.1" stroke-linecap="round" stroke-linejoin="round"/><circle cx="1636.70" cy="685.00" r="15" fill="#10875a"/><path d="M1630.50,685.60 L1635.10,690.40 L1642.30,679.00" fill="none" stroke="#fff" stroke-width="3.1" stroke-linecap="round" stroke-linejoin="round"/><circle cx="1812.05" cy="685.00" r="15" fill="#10875a"/><path d="M1805.85,685.60 L1810.45,690.40 L1817.65,679.00" fill="none" stroke="#fff" stroke-width="3.1" stroke-linecap="round" stroke-linejoin="round"/><circle cx="1996.30" cy="685.00" r="15" fill="#10875a"/><path d="M1990.10,685.60 L1994.70,690.40 L2001.90,679.00" fill="none" stroke="#fff" stroke-width="3.1" stroke-linecap="round" stroke-linejoin="round"/><circle cx="2160.00" cy="685.00" r="15" fill="#10875a"/><path d="M2153.80,685.60 L2158.40,690.40 L2165.60,679.00" fill="none" stroke="#fff" stroke-width="3.1" stroke-linecap="round" stroke-linejoin="round"/><circle cx="1049.75" cy="755.00" r="15" fill="#10875a"/><path d="M1043.55,755.60 L1048.15,760.40 L1055.35,749.00" fill="none" stroke="#fff" stroke-width="3.1" stroke-linecap="round" stroke-linejoin="round"/><circle cx="1270.30" cy="755.00" r="15" fill="#10875a"/><path d="M1264.10,755.60 L1268.70,760.40 L1275.90,749.00" fill="none" stroke="#fff" stroke-width="3.1" stroke-linecap="round" stroke-linejoin="round"/><circle cx="1490.65" cy="755.00" r="15" fill="#10875a"/><path d="M1484.45,755.60 L1489.05,760.40 L1496.25,749.00" fill="none" stroke="#fff" stroke-width="3.1" stroke-linecap="round" stroke-linejoin="round"/><circle cx="1636.70" cy="755.00" r="15" fill="#10875a"/><path d="M1630.50,755.60 L1635.10,760.40 L1642.30,749.00" fill="none" stroke="#fff" stroke-width="3.1" stroke-linecap="round" stroke-linejoin="round"/><circle cx="1812.05" cy="755.00" r="15" fill="#10875a"/><path d="M1805.85,755.60 L1810.45,760.40 L1817.65,749.00" fill="none" stroke="#fff" stroke-width="3.1" stroke-linecap="round" stroke-linejoin="round"/><circle cx="1996.30" cy="755.00" r="15" fill="#de350b"/><path d="M1992.20,750.90 L2000.40,759.10 M2000.40,750.90 L1992.20,759.10" fill="none" stroke="#fff" stroke-width="3.3" stroke-linecap="round"/><circle cx="2160.00" cy="755.00" r="15" fill="#de350b"/><path d="M2155.90,750.90 L2164.10,759.10 M2164.10,750.90 L2155.90,759.10" fill="none" stroke="#fff" stroke-width="3.3" stroke-linecap="round"/><circle cx="1049.75" cy="825.00" r="15" fill="#de350b"/><path d="M1045.65,820.90 L1053.85,829.10 M1053.85,820.90 L1045.65,829.10" fill="none" stroke="#fff" stroke-width="3.3" stroke-linecap="round"/><circle cx="1270.30" cy="825.00" r="15" fill="#de350b"/><path d="M1266.20,820.90 L1274.40,829.10 M1274.40,820.90 L1266.20,829.10" fill="none" stroke="#fff" stroke-width="3.3" stroke-linecap="round"/><circle cx="1490.65" cy="825.00" r="15" fill="#10875a"/><path d="M1484.45,825.60 L1489.05,830.40 L1496.25,819.00" fill="none" stroke="#fff" stroke-width="3.1" stroke-linecap="round" stroke-linejoin="round"/><circle cx="1636.70" cy="825.00" r="15" fill="#10875a"/><path d="M1630.50,825.60 L1635.10,830.40 L1642.30,819.00" fill="none" stroke="#fff" stroke-width="3.1" stroke-linecap="round" stroke-linejoin="round"/><circle cx="1812.05" cy="825.00" r="15" fill="#10875a"/><path d="M1805.85,825.60 L1810.45,830.40 L1817.65,819.00" fill="none" stroke="#fff" stroke-width="3.1" stroke-linecap="round" stroke-linejoin="round"/><circle cx="1996.30" cy="825.00" r="15" fill="#10875a"/><path d="M1990.10,825.60 L1994.70,830.40 L2001.90,819.00" fill="none" stroke="#fff" stroke-width="3.1" stroke-linecap="round" stroke-linejoin="round"/><circle cx="2160.00" cy="825.00" r="15" fill="#10875a"/><path d="M2153.80,825.60 L2158.40,830.40 L2165.60,819.00" fill="none" stroke="#fff" stroke-width="3.1" stroke-linecap="round" stroke-linejoin="round"/></svg>
<div class="t" style="left:143.20px;top:917.30px;font-size:31px;color:#172b4d;transform:scaleX(0.8855)">The</div>
<div class="t" style="left:199.20px;top:917.30px;font-size:31px;color:#172b4d;font-weight:bold;transform:scaleX(0.9189)">Table Excerpt</div>
<div class="t" style="left:394.70px;top:917.30px;font-size:31px;color:#172b4d">&gt;</div>
<div class="t" style="left:422.60px;top:917.30px;font-size:31px;color:#172b4d;font-weight:bold;transform:scaleX(0.9288)">Table Filter</div>
<div class="t" style="left:585.20px;top:917.30px;font-size:31px;color:#172b4d">&gt;</div>
<div class="t" style="left:613.50px;top:917.30px;font-size:31px;color:#172b4d;font-weight:bold;transform:scaleX(0.9092)">Table</div>
<div class="t" style="left:695.00px;top:917.30px;font-size:31px;color:#172b4d;transform:scaleX(0.9602)">structure is built inside</div>
<div class="t" style="left:999.20px;top:917.30px;font-size:31px;color:#172b4d;font-weight:bold;transform:scaleX(0.9284)">Table Toolbox</div>
<svg style="position:absolute;left:1190px;top:908px;" width="54" height="52" viewBox="1190 908 54 52"><g transform="translate(736.90,658.50)"><rect x="462.1" y="258.1" width="37.7" height="36.6" rx="3.6" fill="#3d88c6"/>
<path d="M471.1,264.2 C472.5,263.8 474,263.5 475.4,263.5 A10.6,9.6 0 0 1 486,273.1 L486,282.5 L482,282.5 L482,273.1 A6.6,6.6 0 0 0 475.4,266.5 C475,266.5 474.6,267 474.1,267.8 Z" fill="#fff"/>
<path d="M477.6,281.6 L489.7,281.6 L483.6,289 Z" fill="#fff"/></g></svg>
<div style="position:absolute;left:152.4px;top:998.4px;width:2007.4px;height:75.7px;border:1.5px solid #cfcfcf;border-radius:6px;box-sizing:border-box"></div>
<svg style="position:absolute;left:159px;top:1015.8px;" width="38" height="36" viewBox="159 1015.8 38 36"><defs><linearGradient id="fg657" x1="0" x2="1"><stop offset="0" stop-color="#8f8f8f"/><stop offset="0.5" stop-color="#b3b3b3"/><stop offset="1" stop-color="#9a9a9a"/></linearGradient></defs>
<g transform="translate(1,657.8)">
<path d="M162.3,365.5 L191.7,365.5 L180.6,381 L173.6,381 Z" fill="url(#fg657)"/>
<rect x="173.6" y="378" width="7" height="11.8" rx="1.5" fill="url(#fg657)"/>
<ellipse cx="177" cy="365.2" rx="14.8" ry="3.6" fill="#999"/>
<ellipse cx="177" cy="364.9" rx="12" ry="2.1" fill="#bdbdbd"/></g></svg>
<div class="t" style="left:201.50px;top:1024.80px;font-size:26px;color:#5e6c84;letter-spacing:0.21px">Developer =</div>
<div style="position:absolute;left:356px;top:1007.8px;width:468.4px;height:53.7px;border:1.5px solid #c1c7d0;border-radius:6px;box-sizing:border-box"></div>
<div class="t" style="left:365.90px;top:1024.60px;font-size:26px;color:#8993a4;letter-spacing:0.01px">Click and start typing...</div>
<div class="t" style="left:843.62px;top:1024.80px;font-size:26px;color:#5e6c84;transform:scaleX(0.9794)">Status =</div>
<div style="position:absolute;left:950.5px;top:1007.8px;width:466.8px;height:53.7px;border:1.5px solid #c1c7d0;border-radius:6px;box-sizing:border-box"></div>
<div class="t" style="left:959.90px;top:1024.60px;font-size:26px;color:#8993a4;letter-spacing:0.01px">Click and start typing...</div>
<div class="t" style="left:1436.90px;top:1024.80px;font-size:26px;color:#5e6c84;transform:scaleX(0.9670)">JavaScript =</div>
<div style="position:absolute;left:1587.5px;top:1007.8px;width:468.3px;height:53.7px;border:1.5px solid #c1c7d0;border-radius:6px;box-sizing:border-box"></div>
<div class="t" style="left:1597.54px;top:1024.60px;font-size:26px;color:#8993a4;transform:scaleX(0.9634)">Select items...</div>
<svg style="position:absolute;left:2075px;top:1013.8px;" width="72" height="40" viewBox="2075 1013.8 72 40"><g transform="translate(1,657.8)"><path d="M2101.81,379.44 L2104.96,380.75" stroke="#172b4d" stroke-width="5.2"/><path d="M2096.94,384.31 L2098.25,387.46" stroke="#172b4d" stroke-width="5.2"/><path d="M2090.06,384.31 L2088.75,387.46" stroke="#172b4d" stroke-width="5.2"/><path d="M2085.19,379.44 L2082.04,380.75" stroke="#172b4d" stroke-width="5.2"/><path d="M2085.19,372.56 L2082.04,371.25" stroke="#172b4d" stroke-width="5.2"/><path d="M2090.06,367.69 L2088.75,364.54" stroke="#172b4d" stroke-width="5.2"/><path d="M2096.94,367.69 L2098.25,364.54" stroke="#172b4d" stroke-width="5.2"/><path d="M2101.81,372.56 L2104.96,371.25" stroke="#172b4d" stroke-width="5.2"/><circle cx="2093.5" cy="376.0" r="9.2" fill="none" stroke="#172b4d" stroke-width="3.2"/><path d="M2125.80,374.60 L2131.80,381.00 L2137.80,374.60" fill="none" stroke="#172b4d" stroke-width="3.2" stroke-linecap="round" stroke-linejoin="round"/></g></svg>
<div style="position:absolute;left:152.6px;top:1101.3px;width:2330.9px;height:70px;background:#f0f0f0"></div>
<div style="position:absolute;left:152.6px;top:1171.3px;width:93.0px;height:70px;background:#f0f0f0"></div>
<div style="position:absolute;left:245.6px;top:1171.3px;width:2237.9px;height:70px;background:#fff0b3"></div>
<div style="position:absolute;left:152.6px;top:1241.3px;width:93.0px;height:70px;background:#f0f0f0"></div>
<div style="position:absolute;left:245.6px;top:1241.3px;width:2237.9px;height:70px;background:#ffebe6"></div>
<div style="position:absolute;left:152.6px;top:1311.3px;width:93.0px;height:70px;background:#f0f0f0"></div>
<div style="position:absolute;left:245.6px;top:1311.3px;width:2237.9px;height:70px;background:#ffebe6"></div>
<div style="position:absolute;left:152.6px;top:1381.3px;width:93.0px;height:70px;background:#f0f0f0"></div>
<div style="position:absolute;left:245.6px;top:1381.3px;width:2237.9px;height:70px;background:#ffebe6"></div>
<div style="position:absolute;left:152.6px;top:1451.3px;width:93.0px;height:14.700000000000045px;background:#f0f0f0"></div>
<div style="position:absolute;left:245.6px;top:1451.3px;width:2237.9px;height:14.700000000000045px;background:#ffebe6"></div>
<div style="position:absolute;left:152.1px;top:1100.8px;width:1.1px;height:365.20000000000005px;background:#dcdcdc"></div>
<div style="position:absolute;left:245.1px;top:1100.8px;width:1.1px;height:365.20000000000005px;background:#dcdcdc"></div>
<div style="position:absolute;left:731.8px;top:1100.8px;width:1.1px;height:365.20000000000005px;background:#dcdcdc"></div>
<div style="position:absolute;left:969.8px;top:1100.8px;width:1.1px;height:365.20000000000005px;background:#dcdcdc"></div>
<div style="position:absolute;left:1130.1px;top:1100.8px;width:1.1px;height:365.20000000000005px;background:#dcdcdc"></div>
<div style="position:absolute;left:1410.9px;top:1100.8px;width:1.1px;height:365.20000000000005px;background:#dcdcdc"></div>
<div style="position:absolute;left:1570.8px;top:1100.8px;width:1.1px;height:365.20000000000005px;background:#dcdcdc"></div>
<div style="position:absolute;left:1703.0px;top:1100.8px;width:1.1px;height:365.20000000000005px;background:#dcdcdc"></div>
<div style="position:absolute;left:1921.5px;top:1100.8px;width:1.1px;height:365.20000000000005px;background:#dcdcdc"></div>
<div style="position:absolute;left:2071.5px;top:1100.8px;width:1.1px;height:365.20000000000005px;background:#dcdcdc"></div>
<div style="position:absolute;left:2248.9px;top:1100.8px;width:1.1px;height:365.20000000000005px;background:#dcdcdc"></div>
<div style="position:absolute;left:2483.0px;top:1100.8px;width:1.1px;height:365.20000000000005px;background:#dcdcdc"></div>
<div style="position:absolute;left:152.1px;top:1100.8px;width:2331.9px;height:1.1px;background:#dcdcdc"></div>
<div style="position:absolute;left:152.1px;top:1170.8px;width:2331.9px;height:1.1px;background:#dcdcdc"></div>
<div style="position:absolute;left:152.1px;top:1240.8px;width:2331.9px;height:1.1px;background:#dcdcdc"></div>
<div style="position:absolute;left:152.1px;top:1310.8px;width:2331.9px;height:1.1px;background:#dcdcdc"></div>
<div style="position:absolute;left:152.1px;top:1380.8px;width:2331.9px;height:1.1px;background:#dcdcdc"></div>
<div style="position:absolute;left:152.1px;top:1450.8px;width:2331.9px;height:1.1px;background:#dcdcdc"></div>
<div class="t" style="left:264.28px;top:1122.50px;font-size:31px;color:#333333;font-weight:bold;transform:scaleX(0.9619)">Developer</div>
<div class="t" style="left:789.24px;top:1122.50px;font-size:31px;color:#333333;font-weight:bold;transform:scaleX(0.9563)">Country</div>
<div class="t" style="left:1016.20px;top:1122.50px;font-size:31px;color:#333333;font-weight:bold;transform:scaleX(0.8577)">Java</div>
<div class="t" style="left:1195.10px;top:1122.50px;font-size:31px;color:#333333;font-weight:bold;transform:scaleX(0.9131)">JavaScript</div>
<div class="t" style="left:1456.00px;top:1122.50px;font-size:31px;color:#333333;font-weight:bold;letter-spacing:0.65px">C++</div>
<div class="t" style="left:1614.28px;top:1122.50px;font-size:31px;color:#333333;font-weight:bold;transform:scaleX(0.9196)">C#</div>
<div class="t" style="left:1756.95px;top:1122.50px;font-size:31px;color:#333333;font-weight:bold;transform:scaleX(0.9734)">Python</div>
<div class="t" style="left:1964.81px;top:1122.50px;font-size:31px;color:#333333;font-weight:bold;transform:scaleX(0.9458)">Perl</div>
<div class="t" style="left:2118.83px;top:1122.50px;font-size:31px;color:#333333;font-weight:bold;transform:scaleX(0.9350)">Ruby</div>
<div class="t" style="left:2268.80px;top:1122.50px;font-size:31px;color:#333333;font-weight:bold;transform:scaleX(0.9155)">Status</div>
<div class="t" style="left:173.00px;top:1191.90px;font-size:31px;color:#172b4d">1</div>
<div class="t" style="left:265.20px;top:1191.90px;font-size:31px;color:#172b4d;transform:scaleX(0.9575)">Alan Tomlinson</div>
<div class="t" style="left:795.65px;top:1191.90px;font-size:31px;color:#172b4d;transform:scaleX(0.9319)">Australia</div>
<div style="position:absolute;left:2267.9px;top:1196.3px;width:97px;height:30px;background:#deebff;border-radius:5px"></div>
<div class="t" style="left:2277.68px;top:1200.20px;font-size:22px;color:#0747a6;font-weight:bold;transform:scaleX(0.9231)">MIDDLE</div>
<div class="t" style="left:172.20px;top:1261.90px;font-size:31px;color:#172b4d">2</div>
<div class="t" style="left:264.07px;top:1261.90px;font-size:31px;color:#172b4d;transform:scaleX(0.9168)">Brad Hayes</div>
<div class="t" style="left:823.83px;top:1261.90px;font-size:31px;color:#172b4d;transform:scaleX(0.8588)">USA</div>
<div style="position:absolute;left:2267.9px;top:1266.3px;width:95px;height:30px;background:#dfe1e6;border-radius:5px"></div>
<div class="t" style="left:2278.60px;top:1270.20px;font-size:22px;color:#44546f;font-weight:bold;transform:scaleX(0.9083)">JUNIOR</div>
<div class="t" style="left:172.20px;top:1331.90px;font-size:31px;color:#172b4d">3</div>
<div class="t" style="left:264.46px;top:1331.90px;font-size:31px;color:#172b4d;transform:scaleX(0.9442)">Catherine Lauri</div>
<div class="t" style="left:823.83px;top:1331.90px;font-size:31px;color:#172b4d;transform:scaleX(0.8588)">USA</div>
<div style="position:absolute;left:2267.9px;top:1336.3px;width:94px;height:30px;background:#e3fcef;border-radius:5px"></div>
<div class="t" style="left:2278.60px;top:1340.20px;font-size:22px;color:#006644;font-weight:bold;transform:scaleX(0.8880)">SENIOR</div>
<div class="t" style="left:172.10px;top:1401.90px;font-size:31px;color:#172b4d">4</div>
<div class="t" style="left:264.30px;top:1401.90px;font-size:31px;color:#172b4d;transform:scaleX(0.9491)">John Smith</div>
<div class="t" style="left:823.83px;top:1401.90px;font-size:31px;color:#172b4d;transform:scaleX(0.8588)">USA</div>
<div style="position:absolute;left:2267.9px;top:1406.3px;width:95px;height:30px;background:#dfe1e6;border-radius:5px"></div>
<div class="t" style="left:2278.60px;top:1410.20px;font-size:22px;color:#44546f;font-weight:bold;transform:scaleX(0.9083)">JUNIOR</div>
<svg style="position:absolute;left:961px;top:1171.3px;" width="1320" height="420" viewBox="961 1171.3 1320 420"><circle cx="1050.75" cy="1202.80" r="15" fill="#10875a"/><path d="M1044.55,1203.40 L1049.15,1208.20 L1056.35,1196.80" fill="none" stroke="#fff" stroke-width="3.1" stroke-linecap="round" stroke-linejoin="round"/><circle cx="1271.30" cy="1202.80" r="15" fill="#10875a"/><path d="M1265.10,1203.40 L1269.70,1208.20 L1276.90,1196.80" fill="none" stroke="#fff" stroke-width="3.1" stroke-linecap="round" stroke-linejoin="round"/><circle cx="1491.65" cy="1202.80" r="15" fill="#10875a"/><path d="M1485.45,1203.40 L1490.05,1208.20 L1497.25,1196.80" fill="none" stroke="#fff" stroke-width="3.1" stroke-linecap="round" stroke-linejoin="round"/><circle cx="1637.70" cy="1202.80" r="15" fill="#10875a"/><path d="M1631.50,1203.40 L1636.10,1208.20 L1643.30,1196.80" fill="none" stroke="#fff" stroke-width="3.1" stroke-linecap="round" stroke-linejoin="round"/><circle cx="1813.05" cy="1202.80" r="15" fill="#de350b"/><path d="M1808.95,1198.70 L1817.15,1206.90 M1817.15,1198.70 L1808.95,1206.90" fill="none" stroke="#fff" stroke-width="3.3" stroke-linecap="round"/><circle cx="1997.30" cy="1202.80" r="15" fill="#de350b"/><path d="M1993.20,1198.70 L2001.40,1206.90 M2001.40,1198.70 L1993.20,1206.90" fill="none" stroke="#fff" stroke-width="3.3" stroke-linecap="round"/><circle cx="2161.00" cy="1202.80" r="15" fill="#de350b"/><path d="M2156.90,1198.70 L2165.10,1206.90 M2165.10,1198.70 L2156.90,1206.90" fill="none" stroke="#fff" stroke-width="3.3" stroke-linecap="round"/><circle cx="1050.75" cy="1272.80" r="15" fill="#de350b"/><path d="M1046.65,1268.70 L1054.85,1276.90 M1054.85,1268.70 L1046.65,1276.90" fill="none" stroke="#fff" stroke-width="3.3" stroke-linecap="round"/><circle cx="1271.30" cy="1272.80" r="15" fill="#de350b"/><path d="M1267.20,1268.70 L1275.40,1276.90 M1275.40,1268.70 L1267.20,1276.90" fill="none" stroke="#fff" stroke-width="3.3" stroke-linecap="round"/><circle cx="1491.65" cy="1272.80" r="15" fill="#10875a"/><path d="M1485.45,1273.40 L1490.05,1278.20 L1497.25,1266.80" fill="none" stroke="#fff" stroke-width="3.1" stroke-linecap="round" stroke-linejoin="round"/><circle cx="1637.70" cy="1272.80" r="15" fill="#10875a"/><path d="M1631.50,1273.40 L1636.10,1278.20 L1643.30,1266.80" fill="none" stroke="#fff" stroke-width="3.1" stroke-linecap="round" stroke-linejoin="round"/><circle cx="1813.05" cy="1272.80" r="15" fill="#de350b"/><path d="M1808.95,1268.70 L1817.15,1276.90 M1817.15,1268.70 L1808.95,1276.90" fill="none" stroke="#fff" stroke-width="3.3" stroke-linecap="round"/><circle cx="1997.30" cy="1272.80" r="15" fill="#de350b"/><path d="M1993.20,1268.70 L2001.40,1276.90 M2001.40,1268.70 L1993.20,1276.90" fill="none" stroke="#fff" stroke-width="3.3" stroke-linecap="round"/><circle cx="2161.00" cy="1272.80" r="15" fill="#de350b"/><path d="M2156.90,1268.70 L2165.10,1276.90 M2165.10,1268.70 L2156.90,1276.90" fill="none" stroke="#fff" stroke-width="3.3" stroke-linecap="round"/><circle cx="1050.75" cy="1342.80" r="15" fill="#10875a"/><path d="M1044.55,1343.40 L1049.15,1348.20 L1056.35,1336.80" fill="none" stroke="#fff" stroke-width="3.1" stroke-linecap="round" stroke-linejoin="round"/><circle cx="1271.30" cy="1342.80" r="15" fill="#10875a"/><path d="M1265.10,1343.40 L1269.70,1348.20 L1276.90,1336.80" fill="none" stroke="#fff" stroke-width="3.1" stroke-linecap="round" stroke-linejoin="round"/><circle cx="1491.65" cy="1342.80" r="15" fill="#10875a"/><path d="M1485.45,1343.40 L1490.05,1348.20 L1497.25,1336.80" fill="none" stroke="#fff" stroke-width="3.1" stroke-linecap="round" stroke-linejoin="round"/><circle cx="1637.70" cy="1342.80" r="15" fill="#10875a"/><path d="M1631.50,1343.40 L1636.10,1348.20 L1643.30,1336.80" fill="none" stroke="#fff" stroke-width="3.1" stroke-linecap="round" stroke-linejoin="round"/><circle cx="1813.05" cy="1342.80" r="15" fill="#10875a"/><path d="M1806.85,1343.40 L1811.45,1348.20 L1818.65,1336.80" fill="none" stroke="#fff" stroke-width="3.1" stroke-linecap="round" stroke-linejoin="round"/><circle cx="1997.30" cy="1342.80" r="15" fill="#10875a"/><path d="M1991.10,1343.40 L1995.70,1348.20 L2002.90,1336.80" fill="none" stroke="#fff" stroke-width="3.1" stroke-linecap="round" stroke-linejoin="round"/><circle cx="2161.00" cy="1342.80" r="15" fill="#10875a"/><path d="M2154.80,1343.40 L2159.40,1348.20 L2166.60,1336.80" fill="none" stroke="#fff" stroke-width="3.1" stroke-linecap="round" stroke-linejoin="round"/><circle cx="1050.75" cy="1412.80" r="15" fill="#10875a"/><path d="M1044.55,1413.40 L1049.15,1418.20 L1056.35,1406.80" fill="none" stroke="#fff" stroke-width="3.1" stroke-linecap="round" stroke-linejoin="round"/><circle cx="1271.30" cy="1412.80" r="15" fill="#10875a"/><path d="M1265.10,1413.40 L1269.70,1418.20 L1276.90,1406.80" fill="none" stroke="#fff" stroke-width="3.1" stroke-linecap="round" stroke-linejoin="round"/><circle cx="1491.65" cy="1412.80" r="15" fill="#10875a"/><path d="M1485.45,1413.40 L1490.05,1418.20 L1497.25,1406.80" fill="none" stroke="#fff" stroke-width="3.1" stroke-linecap="round" stroke-linejoin="round"/><circle cx="1637.70" cy="1412.80" r="15" fill="#10875a"/><path d="M1631.50,1413.40 L1636.10,1418.20 L1643.30,1406.80" fill="none" stroke="#fff" stroke-width="3.1" stroke-linecap="round" stroke-linejoin="round"/><circle cx="1813.05" cy="1412.80" r="15" fill="#10875a"/><path d="M1806.85,1413.40 L1811.45,1418.20 L1818.65,1406.80" fill="none" stroke="#fff" stroke-width="3.1" stroke-linecap="round" stroke-linejoin="round"/><circle cx="1997.30" cy="1412.80" r="15" fill="#de350b"/><path d="M1993.20,1408.70 L2001.40,1416.90 M2001.40,1408.70 L1993.20,1416.90" fill="none" stroke="#fff" stroke-width="3.3" stroke-linecap="round"/><circle cx="2161.00" cy="1412.80" r="15" fill="#de350b"/><path d="M2156.90,1408.70 L2165.10,1416.90 M2165.10,1408.70 L2156.90,1416.90" fill="none" stroke="#fff" stroke-width="3.3" stroke-linecap="round"/></svg>
</body></html>
